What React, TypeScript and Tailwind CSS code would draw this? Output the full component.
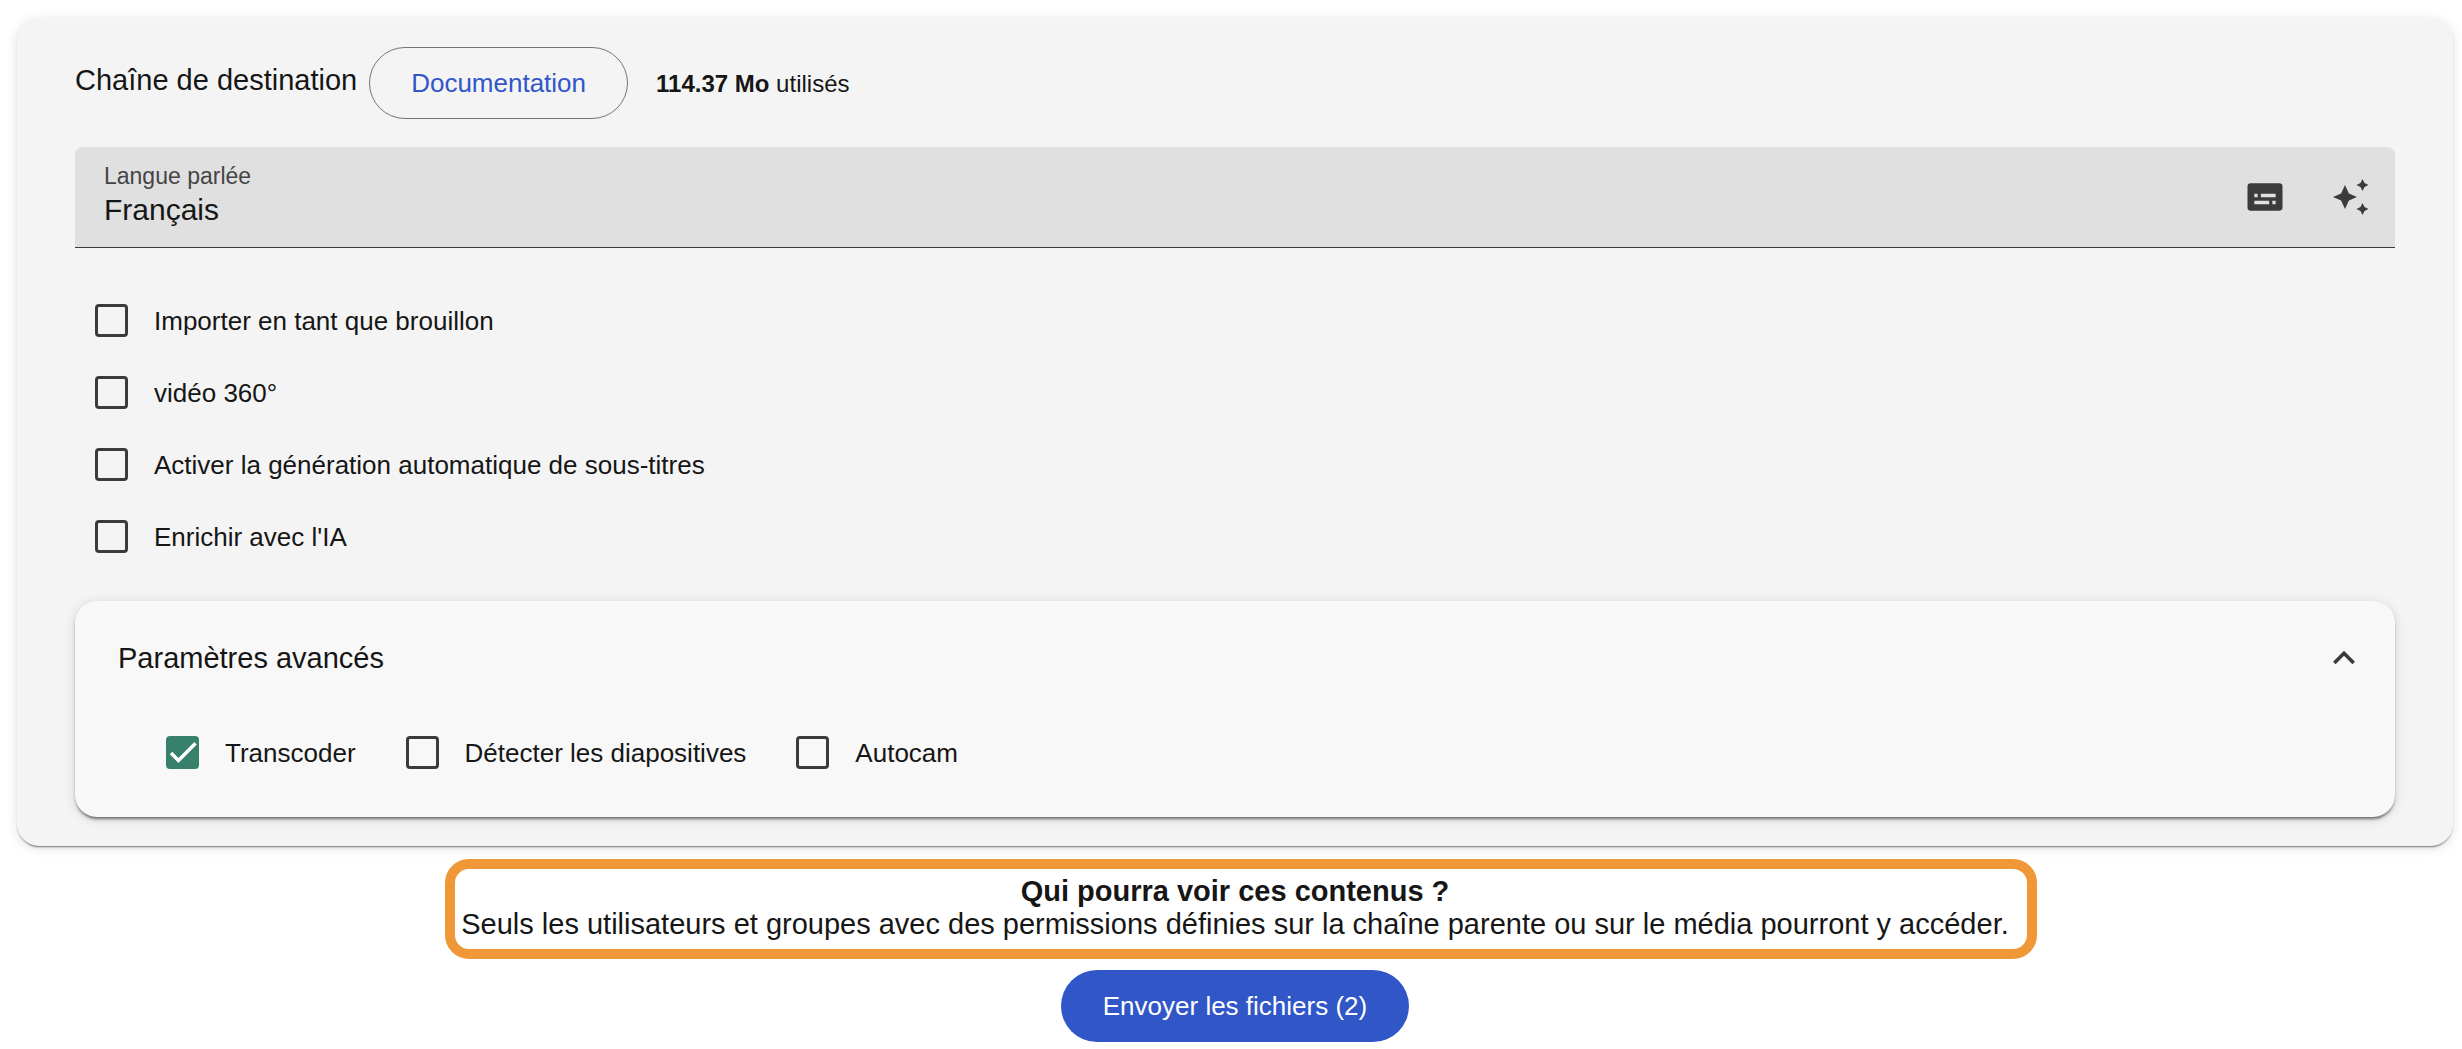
import { useState } from "react";

const FONT = "font-['Liberation_Sans',Arial,sans-serif]";

function SubtitlesIcon() {
  return (
    <svg viewBox="0 0 24 24" className="size-[42px] fill-[#3b3b3b]" aria-hidden="true">
      <path
        fillRule="evenodd"
        d="M3.8 4.2h16.4A1.8 1.8 0 0 1 22 6v12a1.8 1.8 0 0 1-1.8 1.8H3.8A1.8 1.8 0 0 1 2 18V6a1.8 1.8 0 0 1 1.8-1.8zM5.9 10.2v1.9h1.9v-1.9zM9.6 10.2v1.9h8.5v-1.9zM5.9 14.2v1.9h8.5v-1.9zM16.2 14.2v1.9h1.9v-1.9z"
      />
    </svg>
  );
}

function SparklesIcon() {
  return (
    <svg viewBox="0 0 36 36" className="size-9 fill-[#3b3b3b]" aria-hidden="true">
      <path d="M12 6l3.9 8.4L24 18l-8.1 3.6L12 30l-3.9-8.4L0 18l8.1-3.6z" />
      <path d="M29.5 0l2 4.1L35.5 6l-4 1.9-2 4.1-2-4.1-4-1.9 4-1.9z" />
      <path d="M29.5 24l2 4.1 4 1.9-4 1.9-2 4.1-2-4.1-4-1.9 4-1.9z" />
    </svg>
  );
}

function Checkbox({ label, defaultChecked = false }: { label: string; defaultChecked?: boolean }) {
  return (
    <label className="flex h-[72px] items-center gap-[26px] text-[26px] leading-8">
      <span className="grid place-items-center">
        <input
          type="checkbox"
          defaultChecked={defaultChecked}
          className="peer col-start-1 row-start-1 size-[33px] appearance-none rounded-[4px] border-[3px] border-[#3b3b3b] checked:border-[#37806b] checked:bg-[#37806b]"
        />
        <svg
          viewBox="0 0 24 24"
          className="pointer-events-none invisible col-start-1 row-start-1 size-7 fill-none stroke-white peer-checked:visible"
          aria-hidden="true"
        >
          <path d="M1.73 12.91 8.1 19.28 22.79 4.59" strokeWidth="3" />
        </svg>
      </span>
      <span className="pt-0.5">{label}</span>
    </label>
  );
}

export default function App() {
  const [open, setOpen] = useState(true);
  return (
    <main className={`${FONT} bg-white pt-[18px] pr-[9px] pl-[17px] text-[#161616]`}>
      <section className="rounded-[22px] bg-[#f4f4f4] px-[58px] pt-[29px] pb-[29px] shadow-[0_2px_2px_-1px_rgba(0,0,0,0.5),0_2px_12px_rgba(0,0,0,0.12)]">
        <header className="flex items-center">
          <h1 className="pb-1.5 text-[29px] leading-8">Chaîne de destination</h1>
          <a
            href="#documentation"
            className="ml-3 flex h-[72px] items-center rounded-full border border-[#747474] px-[41px] text-[26px] text-[#3156c8]"
          >
            Documentation
          </a>
          <p className="ml-7 pt-px text-2xl">
            <strong>114.37 Mo</strong> utilisés
          </p>
        </header>

        <div className="mt-7 flex h-[101px] items-center rounded-t-lg border-b border-[#3b3b3b] bg-[#e0e0e0] pr-[26px] pl-[29px]">
          <div className="flex min-w-0 flex-1 flex-col pb-1.5">
            <label htmlFor="language" className="text-[23px] leading-8 text-[#454545]">
              Langue parlée
            </label>
            <select id="language" className="appearance-none bg-transparent text-[30px] leading-9">
              <option>Français</option>
            </select>
          </div>
          <button type="button" aria-label="Sous-titres">
            <SubtitlesIcon />
          </button>
          <button type="button" aria-label="Enrichir" className="ml-[47px]">
            <SparklesIcon />
          </button>
        </div>

        <div className="mt-9 flex flex-col items-start pl-5">
          <Checkbox label="Importer en tant que brouillon" />
          <Checkbox label="vidéo 360°" />
          <Checkbox label="Activer la génération automatique de sous-titres" />
          <Checkbox label="Enrichir avec l'IA" />
        </div>

        <section className="mt-[29px] rounded-[22px] bg-[#f8f8f8] pt-[25px] pb-[29px] shadow-[0_3px_3px_-1px_rgba(0,0,0,0.5),0_2px_12px_rgba(0,0,0,0.14)]">
          <button
            type="button"
            aria-expanded={open}
            onClick={() => setOpen(!open)}
            className="flex h-16 w-full items-center justify-between pr-[29px] pl-[43px] text-[29px]"
          >
            <span className="pt-0.5">Paramètres avancés</span>
            <svg viewBox="0 0 24 24" className="size-11 fill-[#3b3b3b]" aria-hidden="true">
              <path d="M12 8l-6 6 1.41 1.41L12 10.83l4.59 4.58L18 14z" />
            </svg>
          </button>
          {open && (
            <div className="mt-[26px] flex flex-wrap gap-x-[50px] pl-[91px]">
              <Checkbox label="Transcoder" defaultChecked />
              <Checkbox label="Détecter les diapositives" />
              <Checkbox label="Autocam" />
            </div>
          )}
        </section>
      </section>

      <div className="mt-[13px] flex justify-center pl-3">
        <div className="rounded-3xl border-10 border-[#f09737] pt-1.5 pr-[18px] pb-2 pl-1.5 text-center text-[29px] leading-[33px]">
          <h2 className="font-bold">Qui pourra voir ces contenus ?</h2>
          <p>
            Seuls les utilisateurs et groupes avec des permissions définies sur la chaîne parente ou sur le média
            pourront y accéder.
          </p>
        </div>
      </div>

      <div className="mt-[11px] flex justify-center pb-[7px]">
        <button type="button" className="h-[72px] rounded-full bg-[#3156c8] px-[42px] text-[26px] text-white">
          Envoyer les fichiers (2)
        </button>
      </div>
    </main>
  );
}
